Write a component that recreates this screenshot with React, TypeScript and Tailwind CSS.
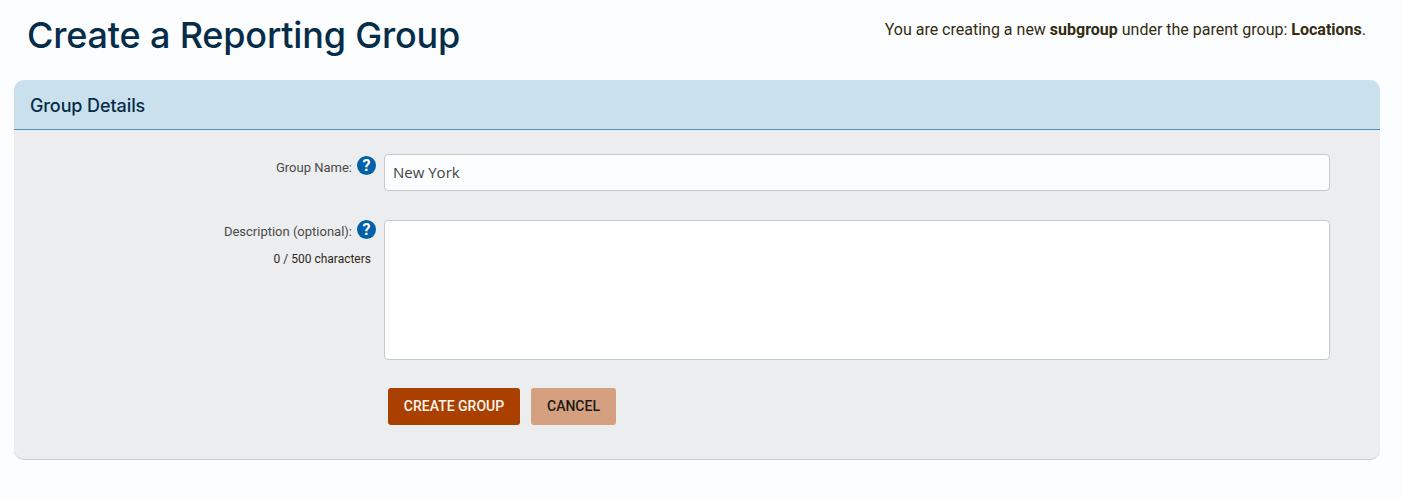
import React from "react";

const HelpIcon = () => (
  <span className="flex h-[19px] w-[19px] shrink-0 items-center justify-center rounded-full bg-[#0061a8] font-['Roboto',sans-serif] text-[16px] font-bold leading-none text-white">
    ?
  </span>
);

const App = () => {
  return (
    <div className="h-[498px] bg-[#fbfdff] font-['Roboto',sans-serif] text-[#332c10]">
      <div className="flex items-start justify-between pl-[27px] pr-[36px] pt-[12px]">
        <h1 className="font-['Inter',sans-serif] text-[36px] font-medium leading-[46px] tracking-[-0.18px] text-[#052c48]">
          Create a Reporting Group
        </h1>
        <p className="pt-[7px] text-[16px] leading-[22px]">
          You are creating a new <b>subgroup</b> under the parent group: <b>Locations</b>.
        </p>
      </div>

      <div className="ml-[14px] mr-[22px] mt-[22px] h-[380px] rounded-[10px] border-b border-b-[#c9cbcd] bg-[#ecedef]">
        <div className="flex h-[50px] items-center rounded-t-[10px] border-b border-b-[#4f8fbd] bg-[#cbe0ed] pl-[16px] pt-[1px] font-['Inter',sans-serif] text-[18px] font-medium tracking-[-0.1px] text-[#052c48]">
          Group Details
        </div>

        <div className="flex pt-[24px]">
          <div className="flex w-[362px] flex-col items-end">
            <div className="flex items-start gap-[5px] text-[13px] leading-[22px] text-[#4a4a4a]">
              <span className="pt-[3px]">Group Name:</span>
              <span className="pt-[2px]">
                <HelpIcon />
              </span>
            </div>
            <div className="mt-[41px] flex items-start gap-[5px] text-[13px] leading-[22px] text-[#4a4a4a]">
              <span className="pt-[1px]">Description (optional):</span>
              <HelpIcon />
            </div>
            <div className="mr-[5px] mt-[8px] text-[12px] leading-[16px] text-[#2f2a1c]">0 / 500 characters</div>
          </div>

          <div className="ml-[8px] w-[946px]">
            <input
              type="text"
              defaultValue="New York"
              className="block h-[37px] w-full rounded-[4px] border border-[#c8c8c8] bg-[#fbfdff] px-[8px] pb-[2px] font-['Open_Sans',sans-serif] text-[15px] text-[#444]"
            />
            <textarea className="mt-[29px] block h-[140px] w-full resize-none rounded-[4px] border border-[#c8c8c8] bg-white" />
            <div className="ml-[4px] mt-[28px] flex gap-[11px]">
              <button className="h-[37px] w-[132px] rounded-[3px] bg-[#a94000] text-[14px] font-medium text-[#fdf5ee]">
                CREATE GROUP
              </button>
              <button className="h-[37px] w-[85px] rounded-[3px] bg-[#d4a07f] text-[14px] font-medium text-[#1c1a18]">
                CANCEL
              </button>
            </div>
          </div>
        </div>
      </div>
    </div>
  );
};

export default App;
